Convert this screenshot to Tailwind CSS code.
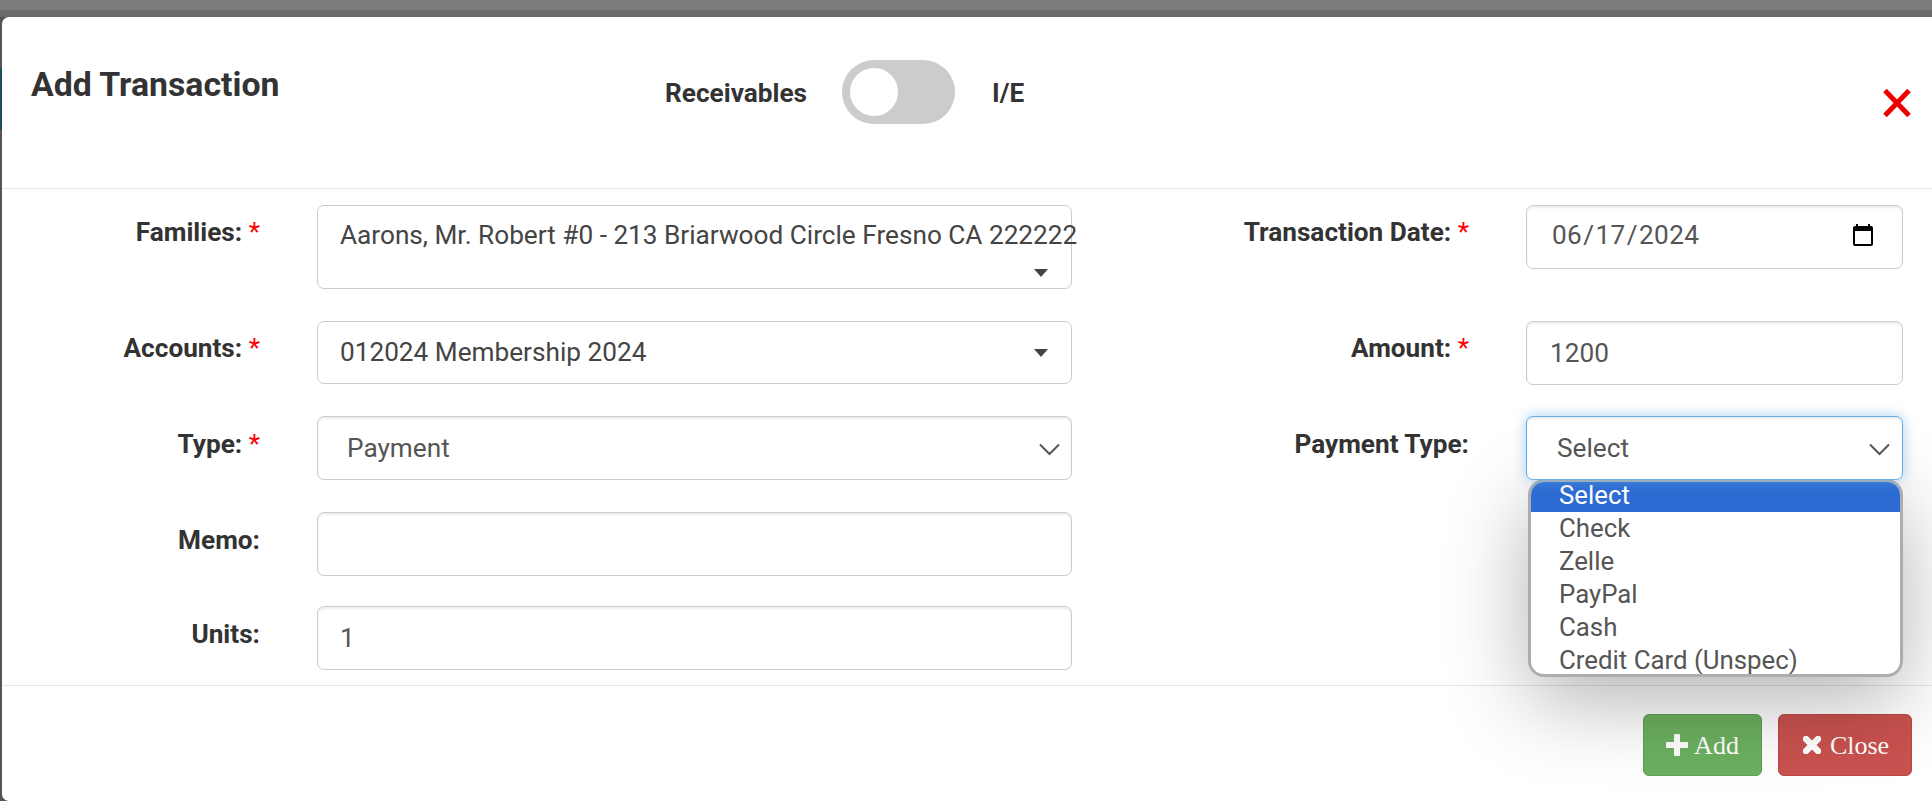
<!DOCTYPE html>
<html lang="en">
<head>
  <meta charset="UTF-8" />
  <title>Add Transaction</title>
  <script src="https://cdn.jsdelivr.net/npm/@tailwindcss/browser@4"></script>
</head>
<body class="relative h-[801px] overflow-hidden bg-[#555555] font-['Roboto',sans-serif] text-[#333333]">
  <div class="h-[10px] bg-[#7c7c7c]"></div>
  <div class="h-[7px] bg-[#6a6a6a]"></div>
  <!-- page behind the backdrop peeks out on the left -->
  <div class="absolute left-0 top-[68px] h-[62px] w-[2px] bg-[#1d4e5c]"></div>

  <!-- Modal -->
  <div class="relative ml-[2px] h-[784px] rounded-tl-[7px] rounded-bl-[7px] bg-white">

    <!-- Header -->
    <div class="flex h-[172px] border-b border-[#e5e5e5]">
      <h4 class="ml-[29px] mt-[48px] w-[634px] text-[33.8px] leading-[40px] font-bold">Add Transaction</h4>
      <div class="mt-[43px] flex h-[64px] items-center">
        <span class="mt-[4px] w-[177px] text-[26.2px] font-bold">Receivables</span>
        <div class="flex h-[64px] w-[113px] items-center rounded-full bg-[#cccccc] pl-[8px]">
          <div class="h-[48px] w-[48px] rounded-full bg-white"></div>
        </div>
        <span class="ml-[37px] mt-[4px] text-[26.2px] font-bold">I/E</span>
      </div>
      <div class="ml-auto mr-[21px] mt-[72px]">
        <svg width="28" height="28" viewBox="0 0 28 28"><path d="M2 1.5 L26 26.5 M26 1.5 L2 26.5" stroke="#ee0000" stroke-width="5" fill="none"/></svg>
      </div>
    </div>

    <!-- Form rows -->
    <div class="flex h-[496px] flex-col pt-[16px]">
      <div class="flex h-[116px] items-start">
        <label class="mt-[8px] w-[258px] text-right text-[26.2px] font-bold">Families: <span class="font-normal text-[#ff0000]">*</span></label>
        <div class="relative ml-[57px] h-[84px] w-[755px] rounded-[7px] border border-[#cccccc] pl-[22px] pt-[13px] text-[26.2px] leading-[32px] whitespace-nowrap text-[#444444]">
          Aarons, Mr. Robert #0 - 213 Briarwood Circle Fresno CA 222222
          <div class="absolute right-[23px] bottom-[11px] h-0 w-0 border-x-[7px] border-t-[8px] border-x-transparent border-t-[#444444]"></div>
        </div>
        <label class="mt-[8px] w-[397px] text-right text-[26.2px] font-bold">Transaction Date: <span class="font-normal text-[#ff0000]">*</span></label>
        <input type="date" value="2024-06-17" class="ml-[57px] h-[64px] w-[377px] rounded-[7px] border border-[#cccccc] pb-[2px] pl-[24px] pr-[24px] text-[26.2px] tracking-[0.4px] text-[#555555] shadow-[inset_0_2px_2px_rgba(0,0,0,0.075)]" />
      </div>

      <div class="flex h-[95px] items-start">
        <label class="mt-[8px] w-[258px] text-right text-[26.2px] font-bold">Accounts: <span class="font-normal text-[#ff0000]">*</span></label>
        <div class="relative ml-[57px] flex h-[63px] w-[755px] items-center rounded-[7px] border border-[#cccccc] pl-[22px] text-[26.2px] text-[#444444]">
          012024 Membership 2024
          <div class="absolute right-[23px] top-[27px] h-0 w-0 border-x-[7px] border-t-[8px] border-x-transparent border-t-[#444444]"></div>
        </div>
        <label class="mt-[8px] w-[397px] text-right text-[26.2px] font-bold">Amount: <span class="font-normal text-[#ff0000]">*</span></label>
        <input type="text" value="1200" class="ml-[57px] h-[64px] w-[377px] rounded-[7px] border border-[#cccccc] pl-[23px] text-[26.2px] text-[#555555] shadow-[inset_0_2px_2px_rgba(0,0,0,0.075)]" />
      </div>

      <div class="flex h-[96px] items-start">
        <label class="mt-[9px] w-[258px] text-right text-[26.2px] font-bold">Type: <span class="font-normal text-[#ff0000]">*</span></label>
        <div class="relative ml-[57px] flex h-[64px] w-[755px] items-center rounded-[7px] border border-[#cccccc] pl-[29px] pt-[2px] text-[26.2px] text-[#555555] shadow-[inset_0_2px_2px_rgba(0,0,0,0.075)]">
          Payment
          <svg class="absolute right-[11px] top-[26px]" width="21" height="13" viewBox="0 0 21 13"><path d="M1 1.5 L10.5 11 L20 1.5" stroke="#555555" stroke-width="2" fill="none"/></svg>
        </div>
        <label class="mt-[9px] w-[397px] text-right text-[26.2px] font-bold">Payment Type:</label>
        <div class="relative z-10 ml-[57px] flex h-[64px] w-[377px] items-center rounded-[7px] border border-[#66afe9] bg-white pl-[30px] pt-[2px] text-[26.2px] text-[#555555] shadow-[inset_0_2px_2px_rgba(0,0,0,0.075),0_0_13px_rgba(102,175,233,0.6)]">
          Select
          <svg class="absolute right-[12px] top-[26px]" width="21" height="13" viewBox="0 0 21 13"><path d="M1 1.5 L10.5 11 L20 1.5" stroke="#555555" stroke-width="2" fill="none"/></svg>
        </div>
      </div>

      <div class="flex h-[94px] items-start">
        <label class="mt-[9px] w-[258px] text-right text-[26.2px] font-bold">Memo:</label>
        <input type="text" class="ml-[57px] h-[64px] w-[755px] rounded-[7px] border border-[#cccccc] shadow-[inset_0_2px_2px_rgba(0,0,0,0.075)]" />
      </div>

      <div class="flex h-[64px] items-start">
        <label class="mt-[9px] w-[258px] text-right text-[26.2px] font-bold">Units:</label>
        <input type="text" value="1" class="ml-[57px] h-[64px] w-[755px] rounded-[7px] border border-[#cccccc] pl-[22px] text-[26.2px] text-[#555555] shadow-[inset_0_2px_2px_rgba(0,0,0,0.075)]" />
      </div>
    </div>

    <!-- Footer -->
    <div class="flex justify-end gap-[16px] border-t border-[#e5e5e5] pr-[20px] pt-[28px] font-['Liberation_Serif',serif] text-[26px] text-white">
      <button class="flex h-[62px] w-[119px] items-center justify-center gap-[6px] rounded-[6px] border border-[#5f9f54] bg-[#6cb060]">
        <svg width="22" height="22" viewBox="0 0 22 22"><path d="M8 1a1 1 0 0 1 1-1h4a1 1 0 0 1 1 1v7h7a1 1 0 0 1 1 1v4a1 1 0 0 1-1 1h-7v7a1 1 0 0 1-1 1H9a1 1 0 0 1-1-1v-7H1a1 1 0 0 1-1-1V9a1 1 0 0 1 1-1h7z" fill="#ffffff"/></svg>
        Add
      </button>
      <button class="flex h-[62px] w-[134px] items-center justify-center gap-[9px] rounded-[6px] border border-[#bb4744] bg-[#c9524f] pl-[2px]">
        <svg width="18" height="18" viewBox="0 0 18 18"><path d="M3 3 L15 15 M15 3 L3 15" stroke="#ffffff" stroke-width="6.5" stroke-linecap="round" fill="none"/></svg>
        Close
      </button>
    </div>

    <!-- Open select list -->
    <ul class="absolute left-[1526px] top-[462px] h-[198px] w-[375px] overflow-hidden rounded-[16px] border-[3px] border-[#adadad] bg-white text-[25.8px] leading-[33px] text-[#555555] shadow-[0_24px_84px_rgba(0,0,0,0.3)]">
      <li class="-mt-[3px] bg-[#2d6cd2] pl-[28px] text-white">Select</li>
      <li class="pl-[28px]">Check</li>
      <li class="pl-[28px]">Zelle</li>
      <li class="pl-[28px]">PayPal</li>
      <li class="pl-[28px]">Cash</li>
      <li class="pl-[28px]">Credit Card (Unspec)</li>
    </ul>
  </div>
</body>
</html>
